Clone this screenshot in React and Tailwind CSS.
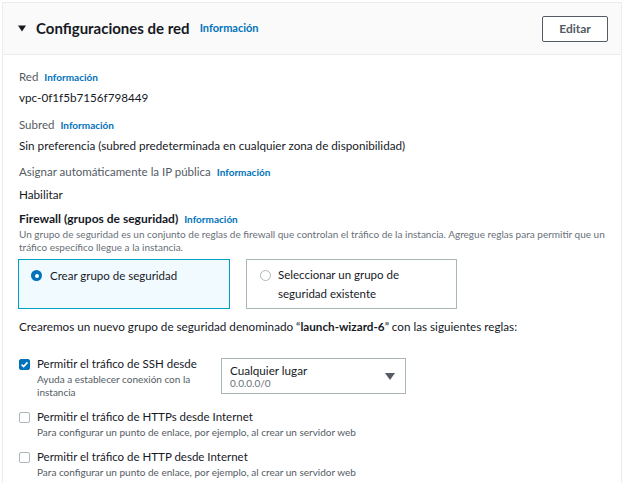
import React from "react";

const Info = ({ className = "" }) => (
  <span className={`ml-[6px] text-[10px] font-bold text-[#0073bb] ${className}`}>
    Información
  </span>
);

const Check = ({ checked = false }) => (
  <span
    className={`mt-[2px] flex h-[11px] w-[11px] flex-shrink-0 items-center justify-center rounded-[2px] border ${
      checked ? "border-[#0073bb] bg-[#0073bb]" : "border-[#aab7b8] bg-white"
    }`}
  >
    {checked && (
      <svg width="9" height="9" viewBox="0 0 10 10">
        <path d="M1.8 5.2 L4 7.4 L8.3 2.6" fill="none" stroke="white" strokeWidth="1.8" />
      </svg>
    )}
  </span>
);

const RuleRow = ({ checked, title, desc, className = "" }) => (
  <div className={`flex gap-[7px] ${className}`}>
    <Check checked={checked} />
    <div>
      <div className="text-[11.5px] leading-[14px] text-[#16191f]">{title}</div>
      <div className="mt-[2px] text-[10px] leading-[13px] text-[#545b64]">{desc}</div>
    </div>
  </div>
);

export default function App() {
  return (
    <div
      className="h-[483px] w-[626px] overflow-hidden bg-white pl-[2px] pr-[4px] pt-[2px]"
      style={{ fontFamily: "Lato, 'Open Sans', sans-serif" }}
    >
      <div className="h-[490px] border border-[#eaeded] bg-white">
        <div className="flex h-[52px] items-center justify-between border-b border-[#eaeded] bg-[#fafafa] pl-[15px] pr-[13px]">
          <div className="flex items-center">
            <svg width="8" height="7" viewBox="0 0 8 7" className="mr-[10px]">
              <path d="M0 0.5 L8 0.5 L4 6.5 Z" fill="#16191f" />
            </svg>
            <span className="text-[15px] font-bold text-[#16191f]">Configuraciones de red</span>
            <span className="ml-[10px] text-[11px] font-bold text-[#0073bb]">Información</span>
          </div>
          <button className="h-[26px] w-[66px] rounded-[2px] border border-[#545b64] bg-white text-[12px] font-bold text-[#545b64]">
            Editar
          </button>
        </div>

        <div className="px-[16px] pt-[14px]">
          <div className="text-[11.5px] leading-[16px] text-[#545b64]">
            Red<Info />
          </div>
          <div className="mt-[2px] text-[11.7px] leading-[20px] text-[#16191f]">vpc-0f1f5b7156f798449</div>

          <div className="mt-[10px] text-[11.5px] leading-[16px] text-[#545b64]">
            Subred<Info />
          </div>
          <div className="mt-[2px] text-[11.7px] leading-[20px] text-[#16191f]">
            Sin preferencia (subred predeterminada en cualquier zona de disponibilidad)
          </div>

          <div className="mt-[9px] text-[11.5px] leading-[16px] text-[#545b64]">
            Asignar automáticamente la IP pública<Info />
          </div>
          <div className="mt-[4px] text-[11.7px] leading-[20px] text-[#16191f]">Habilitar</div>

          <div className="mt-[7px] text-[12px] font-bold leading-[16px] text-[#16191f]">
            Firewall (grupos de seguridad)<Info />
          </div>
          <div className="mt-[1px] text-[10px] leading-[13px] text-[#687078]">
            Un grupo de seguridad es un conjunto de reglas de firewall que controlan el tráfico de la instancia. Agregue reglas para permitir que un tráfico específico llegue a la instancia.
          </div>

          <div className="-ml-[1px] mt-[5px] flex gap-[16px]">
            <div className="flex h-[50px] w-[212px] gap-[8px] border border-[#00a1c9] bg-[#f1faff] pl-[12px] pt-[6px]">
              <span className="mt-[4px] flex h-[11px] w-[11px] items-center justify-center rounded-full bg-[#0073bb]">
                <span className="h-[4px] w-[4px] rounded-full bg-white" />
              </span>
              <span className="text-[11.5px] leading-[19px] text-[#16191f]">Crear grupo de seguridad</span>
            </div>
            <div className="flex h-[50px] w-[211px] gap-[7px] border border-[#aab7b8] bg-white pl-[13px] pt-[5px]">
              <span className="mt-[5px] h-[11px] w-[11px] flex-shrink-0 rounded-full border border-[#aab7b8] bg-white" />
              <span className="text-[11.5px] leading-[19px] text-[#16191f]">
                Seleccionar un grupo de
                <br />
                seguridad existente
              </span>
            </div>
          </div>

          <div className="mt-[9px] text-[11.7px] leading-[16px] text-[#16191f]">
            Crearemos un nuevo grupo de seguridad denominado “<b>launch-wizard-6</b>” con las siguientes reglas:
          </div>

          <div className="mt-[23px] flex items-start">
            <div className="flex w-[202px] gap-[7px]">
              <Check checked />
              <div>
                <div className="text-[11.5px] leading-[14px] text-[#16191f]">Permitir el tráfico de SSH desde</div>
                <div className="mt-[2px] w-[160px] text-[10px] leading-[13px] text-[#545b64]">
                  Ayuda a establecer conexión con la instancia
                </div>
              </div>
            </div>
            <div className="mt-[1px] flex h-[36px] w-[185px] items-center justify-between border border-[#aab7b8] pl-[8px] pr-[10px]">
              <div>
                <div className="text-[11.7px] leading-[14px] text-[#16191f]">Cualquier lugar</div>
                <div className="text-[10px] leading-[12px] text-[#687078]">0.0.0.0/0</div>
              </div>
              <svg width="10" height="7" viewBox="0 0 10 7">
                <path d="M0 0 L10 0 L5 7 Z" fill="#545b64" />
              </svg>
            </div>
          </div>

          <RuleRow
            className="mt-[11px]"
            title="Permitir el tráfico de HTTPs desde Internet"
            desc="Para configurar un punto de enlace, por ejemplo, al crear un servidor web"
          />
          <RuleRow
            className="mt-[11px]"
            title="Permitir el tráfico de HTTP desde Internet"
            desc="Para configurar un punto de enlace, por ejemplo, al crear un servidor web"
          />
        </div>
      </div>
    </div>
  );
}
